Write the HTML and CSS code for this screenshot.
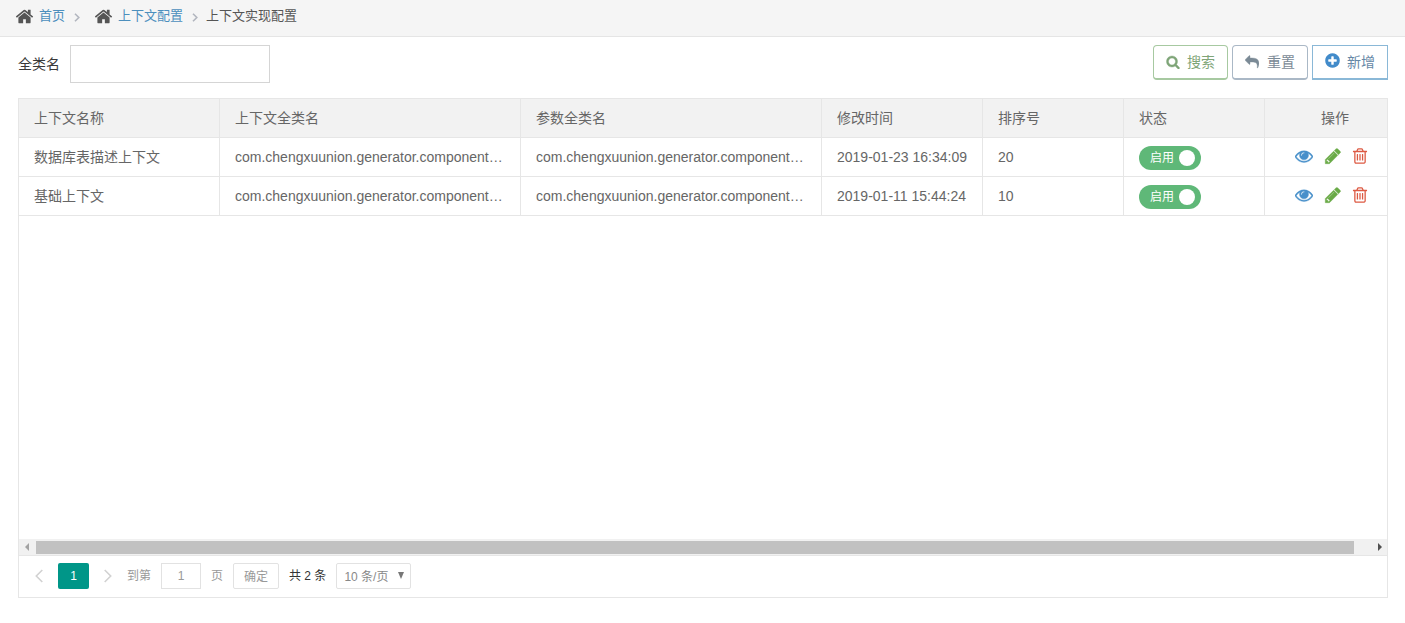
FILE: index.html
```html
<!DOCTYPE html>
<html lang="zh-CN">
<head>
<meta charset="utf-8">
<title>上下文实现配置</title>
<link rel="stylesheet" href="styles.css">
</head>
<body>
<svg class="sprite" width="0" height="0">
  <symbol id="home" viewBox="0 0 1792 1792"><path d="M1472 992v480q0 26-19 45t-45 19h-384v-384h-256v384h-384q-26 0-45-19t-19-45v-480q0-1 .5-3t.5-3l575-474 575 474q1 2 1 6zm223-69l-62 74q-8 9-21 11h-3q-13 0-21-7l-692-577-692 577q-12 8-24 7-13-2-21-11l-62-74q-8-10-7-23.5t11-21.5l719-599q32-26 76-26t76 26l244 204v-195q0-14 9-23t23-9h192q14 0 23 9t9 23v408l219 182q10 8 11 21.5t-7 23.5z"/></symbol>
  <symbol id="search" viewBox="0 0 1792 1792"><path d="M1216 832q0-185-131.500-316.500t-316.500-131.500-316.500 131.500-131.500 316.500 131.500 316.500 316.500 131.500 316.500-131.500 131.500-316.500zm512 832q0 52-38 90t-90 38q-54 0-90-38l-343-342q-179 124-399 124-143 0-273.500-55.500t-225-150-150-225-55.500-273.500 55.500-273.500 150-225 225-150 273.500-55.500 273.500 55.500 225 150 150 225 55.500 273.500q0 220-124 399l343 343q37 37 37 90z"/></symbol>
  <symbol id="reply" viewBox="0 0 1792 1792"><path d="M1792 1120q0 166-127 451-3 7-10.500 24t-13.500 30-13 22q-12 17-28 17-15 0-23.500-10t-8.500-25q0-9 2.500-26.500t2.500-23.500q5-68 5-123 0-101-17.500-181t-48.500-138.500-80-101-105.500-69.500-133-42.500-154-21.500-175.500-6h-224v256q0 26-19 45t-45 19-45-19l-512-512q-19-19-19-45t19-45l512-512q19-19 45-19t45 19 19 45v256h224q713 0 875 403 53 134 53 333z"/></symbol>
  <symbol id="plus" viewBox="0 0 1792 1792"><path d="M1344 960v-128q0-26-19-45t-45-19h-256v-256q0-26-19-45t-45-19h-128q-26 0-45 19t-19 45v256h-256q-26 0-45 19t-19 45v128q0 26 19 45t45 19h256v256q0 26 19 45t45 19h128q26 0 45-19t19-45v-256h256q26 0 45-19t19-45zm320-64q0 209-103 385.500t-279.500 279.500-385.500 103-385.500-103-279.500-279.500-103-385.500 103-385.500 279.500-279.500 385.500-103 385.500 103 279.500 279.500 103 385.500z"/></symbol>
  <symbol id="eye" viewBox="0 0 1792 1792"><path d="M1664 960q-152-236-381-353 61 104 61 225 0 185-131.500 316.500t-316.500 131.500-316.500-131.500-131.500-316.500q0-121 61-225-229 117-381 353 133 205 333.500 326.500t434.500 121.500 434.500-121.500 333.500-326.500zm-720-384q0-20-14-34t-34-14q-125 0-214.500 89.500t-89.500 214.500q0 20 14 34t34 14 34-14 14-34q0-86 61-147t147-61q20 0 34-14t14-34zm848 384q0 34-20 69-140 230-376.500 368.500t-499.500 138.500-499.500-139-376.500-368q-20-35-20-69t20-69q140-229 376.500-368t499.500-139 499.500 139 376.500 368q20 35 20 69z"/></symbol>
  <symbol id="pencil" viewBox="0 0 1792 1792"><path d="M491 1536l91-91-235-235-91 91v107h128v128h107zm523-928q0-22-22-22-10 0-17 7l-542 542q-7 7-7 17 0 22 22 22 10 0 17-7l542-542q7-7 7-17zm-54-192l416 416-832 832h-416v-416zm683 96q0 53-37 90l-166 166-416-416 166-165q36-38 90-38 53 0 91 38l235 234q37 39 37 91z"/></symbol>
  <symbol id="trash" viewBox="0 0 1792 1792"><path d="M704 736v576q0 14-9 23t-23 9h-64q-14 0-23-9t-9-23v-576q0-14 9-23t23-9h64q14 0 23 9t9 23zm256 0v576q0 14-9 23t-23 9h-64q-14 0-23-9t-9-23v-576q0-14 9-23t23-9h64q14 0 23 9t9 23zm256 0v576q0 14-9 23t-23 9h-64q-14 0-23-9t-9-23v-576q0-14 9-23t23-9h64q14 0 23 9t9 23zm128 724v-948h-896v948q0 22 7 40.500t14.500 27 10.500 8.500h832q3 0 10.500-8.500t14.500-27 7-40.500zm-672-1076h448l-48-117q-7-9-17-11h-317q-10 2-17 11zm928 32v64q0 14-9 23t-23 9h-96v948q0 83-47 143.500t-113 60.500h-832q-66 0-113-58.500t-47-141.500v-952h-96q-14 0-23-9t-9-23v-64q0-14 9-23t23-9h309l70-167q15-37 54-63t79-26h320q40 0 79 26t54 63l70 167h309q14 0 23 9t9 23z"/></symbol>
</svg>

<nav class="crumbs">
  <svg class="home"><use href="#home"/></svg><a>首页</a>
  <svg class="sep" viewBox="0 0 6 9"><path d="M1 .7 4.800 4.500 1 8.300"/></svg>
  <svg class="home second"><use href="#home"/></svg><a>上下文配置</a>
  <svg class="sep last" viewBox="0 0 6 9"><path d="M1 .7 4.800 4.500 1 8.300"/></svg>
  <span>上下文实现配置</span>
</nav>

<div class="toolbar">
  <label class="field"><span>全类名</span><input type="text"></label>
  <div class="buttons">
    <button class="btn green"><svg class="i14"><use href="#search"/></svg>搜索</button>
    <button class="btn grey"><svg class="i14"><use href="#reply"/></svg>重置</button>
    <button class="btn blue"><svg class="i17"><use href="#plus"/></svg>新增</button>
  </div>
</div>

<main class="panel">
  <div class="row head">
    <div>上下文名称</div><div>上下文全类名</div><div>参数全类名</div><div>修改时间</div><div>排序号</div><div>状态</div><div class="ops-head">操作</div>
  </div>
  <div class="row">
    <div>数据库表描述上下文</div><div>com.chengxuunion.generator.component…</div><div>com.chengxuunion.generator.component…</div><div>2019-01-23 16:34:09</div><div>20</div>
    <div class="state"><span class="switch">启用<i></i></span></div>
    <div class="ops"><svg class="eye"><use href="#eye"/></svg><svg class="pencil"><use href="#pencil"/></svg><svg class="trash"><use href="#trash"/></svg></div>
  </div>
  <div class="row">
    <div>基础上下文</div><div>com.chengxuunion.generator.component…</div><div>com.chengxuunion.generator.component…</div><div>2019-01-11 15:44:24</div><div>10</div>
    <div class="state"><span class="switch">启用<i></i></span></div>
    <div class="ops"><svg class="eye"><use href="#eye"/></svg><svg class="pencil"><use href="#pencil"/></svg><svg class="trash"><use href="#trash"/></svg></div>
  </div>
  <div class="space"></div>
  <div class="scroll">
    <svg class="arrow" viewBox="0 0 17 16"><path d="M10 4v8L6 8z" fill="#a3a3a3"/></svg>
    <div class="thumb"></div>
    <svg class="arrow end" viewBox="0 0 17 16"><path d="M8 4v8L12 8z" fill="#505050"/></svg>
  </div>
  <div class="pager">
    <svg class="chev" viewBox="0 0 8 14"><path d="M7.300 1 1.300 7l6 6"/></svg>
    <span class="current">1</span>
    <svg class="chev" viewBox="0 0 8 14"><path d="M.7 1l6 6-6 6"/></svg>
    <span class="goto">到第</span>
    <input class="page" value="1">
    <span class="unit">页</span>
    <button class="ok">确定</button>
    <span class="total">共 2 条</span>
    <span class="size">10 条/页<svg viewBox="0 0 6 7"><path d="M0 0h6L3 7z"/></svg></span>
  </div>
</main>
</body>
</html>
```
FILE: styles.css
```css
* { box-sizing: border-box; }
body {
  margin: 0;
  height: 623px;
  overflow: hidden;
  background: #fff;
  color: #666;
  font: 14px/20px "Liberation Sans", "Noto Sans CJK SC", sans-serif;
}
svg { display: block; flex: none; fill: currentColor; }
.sprite { position: absolute; }
button, input { font: inherit; color: inherit; background: #fff; margin: 0; outline: 0; }

.crumbs {
  display: flex;
  align-items: center;
  height: 37px;
  padding: 0 0 4px 15px;
  background: #f5f5f5;
  border-bottom: 1px solid #e5e5e5;
  font-size: 13px;
  color: #555;
}
.crumbs a { color: #4c8fbd; }
.home { width: 19px; height: 19px; margin-right: 5px; }
.sep { width: 6px; height: 9px; margin: 2px 14px 0 9px; fill: none; stroke: #b2b6bf; stroke-width: 1.6; }
.sep.last { margin-right: 8px; }

.toolbar { display: flex; justify-content: space-between; padding: 8px 17px 0 18px; height: 61px; }
.field { display: flex; height: 38px; align-items: center; color: #393939; gap: 10px; }
.field input { width: 200px; height: 38px; border: 1px solid #d5d5d5; }
.buttons { display: flex; gap: 4px; }
.btn {
  display: flex;
  align-items: center;
  height: 35px;
  width: 76px;
  padding: 0 0 1px 12px;
  border: 1px solid;
  border-bottom-width: 2px;
  border-radius: 4px;
}
.i14 { width: 14px; height: 14px; margin-right: 7px; stroke: currentColor; stroke-width: 50; }
.i17 { width: 17px; height: 17px; margin: -2px 6px 0 -1px; }
.green { width: 75px; color: #7fa578; border-color: #a7c9a1; }
.grey { color: #7b8a96; border-color: #aab8c6; }
.grey .i14 { margin-right: 8px; }
.blue { color: #6688a6; border-color: #8ab8d7; border-radius: 0; }
.blue svg { color: #428bca; }

.panel {
  display: flex;
  flex-direction: column;
  width: 1370px;
  height: 500px;
  margin-left: 18px;
  border: 1px solid #e6e6e6;
}
.row { display: grid; grid-template-columns: 201px 301px 301px 161px 141px 141px 122px; height: 39px; border-bottom: 1px solid #e6e6e6; }
.row > div {
  padding: 0 15px;
  line-height: 38px;
  border-right: 1px solid #e6e6e6;
  white-space: nowrap;
}
.row > div:last-child { border-right: 0; }
.head { background: #f2f2f2; }
.row > .ops-head { padding-left: 56px; }
.row > .state { display: flex; padding-top: 8px; }
.switch {
  display: flex;
  align-items: center;
  justify-content: space-between;
  width: 62px;
  height: 24px;
  padding: 0 6px 0 11px;
  border-radius: 12px;
  background: #5fb878;
  color: #fff;
  font-size: 12px;
  line-height: 26px;
}
.switch i { width: 16px; height: 16px; border-radius: 50%; background: #fff; }
.row > .ops { display: flex; padding: 9px 0 0 30px; }
.ops svg { width: 18px; height: 18px; }
.ops .eye, .ops .pencil { stroke: currentColor; stroke-width: 40; }
.eye { color: #478fca; margin-right: 11px; }
.pencil { color: #69aa46; margin-right: 9px; }
.trash { color: #dd5a43; }
.space { flex: 1; }

.scroll { display: flex; height: 17px; background: #f1f1f1; border-bottom: 1px solid #e6e6e6; }
.arrow { width: 17px; height: 16px; }
.arrow.end { margin-left: auto; }
.thumb { width: 1318px; height: 13px; margin-top: 2px; background: #c1c1c1; }

.pager { display: flex; height: 41px; padding: 7px 0 0 16px; font-size: 12px; line-height: 26px; color: #999; }
.chev { width: 8px; height: 14px; margin-top: 6px; fill: none; stroke: #d2d2d2; stroke-width: 1.6; }
.current { width: 31px; height: 26px; margin: 0 15px; background: #009688; color: #fff; text-align: center; border-radius: 2px; }
.goto { margin: 0 10px 0 15px; }
.page { width: 40px; height: 26px; padding: 0; border: 1px solid #e2e2e2; text-align: center; }
.unit { margin: 0 10px; }
.ok { width: 46px; height: 26px; padding: 1px 0 0; border: 1px solid #e2e2e2; border-radius: 2px; line-height: 24px; }
.total { margin: 0 10px; color: #333; }
.size { display: flex; align-items: center; justify-content: space-between; width: 75px; height: 26px; padding: 1px 6px 0 7px; border: 1px solid #e2e2e2; border-radius: 2px; color: #888; }
.size svg { width: 6px; height: 7px; margin-top: -2px; color: #777; }
```
